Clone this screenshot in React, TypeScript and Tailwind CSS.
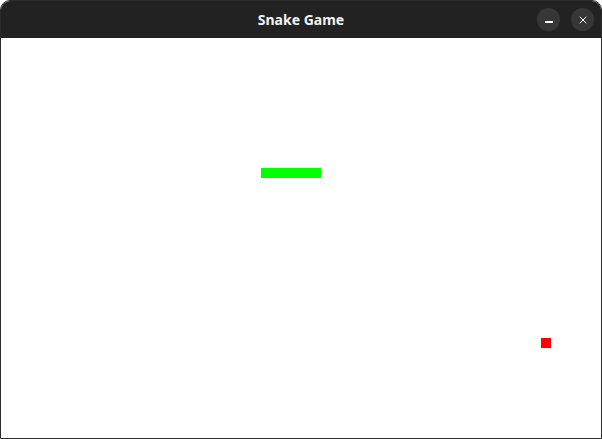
import { X } from "lucide-react";

export default function App() {
  return (
    <div className="flex h-[439px] w-[602px] flex-col overflow-hidden rounded-t-[10px] border border-[#2c2c2c] bg-white font-['Noto_Sans',sans-serif]">
      <div className="relative flex h-[37px] shrink-0 items-center justify-center bg-[#222222]">
        <span className="text-[14px] font-bold text-[#f2f2f2]">Snake Game</span>
        <div className="absolute right-[7px] top-[7px] flex gap-[11px]">
          <button className="flex h-[23px] w-[23px] items-center justify-center rounded-full bg-[#373737]">
            <span className="mt-[5px] block h-[1.5px] w-[8px] bg-white" />
          </button>
          <button className="flex h-[23px] w-[23px] items-center justify-center rounded-full bg-[#373737]">
            <X className="h-[12px] w-[12px] text-white" strokeWidth={2} />
          </button>
        </div>
      </div>
      <div className="relative flex-1 bg-white">
        <div className="absolute left-[260px] top-[130px] h-[10px] w-[60px] bg-[#00ff00]" />
        <div className="absolute left-[540px] top-[300px] h-[10px] w-[10px] bg-[#ff0000]" />
      </div>
    </div>
  );
}
